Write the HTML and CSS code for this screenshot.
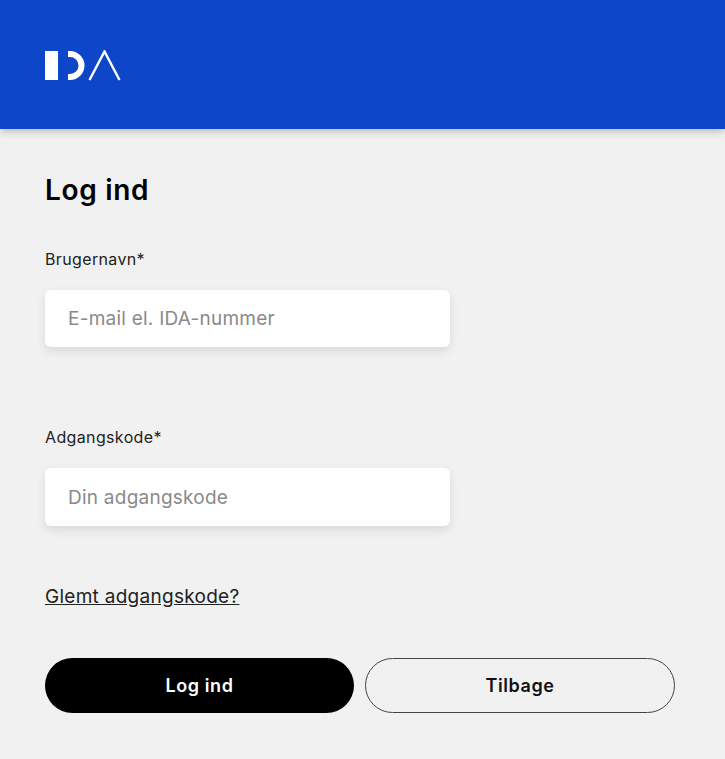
FILE: index.html
```html
<!DOCTYPE html>
<html lang="da">
  <head>
    <meta name="viewport" content="width=device-width, initial-scale=1.0" />
    <title>Log ind</title>
    <link rel="stylesheet" href="styles.css">
  </head>
  <body>
    <header class="topbar">
      <svg class="logo" width="76" height="31" viewBox="0 0 76 31" aria-label="IDA">
        <rect x="0" y="1" width="13" height="29" fill="#fff" />
        <path d="M23 1 H25 A14.5 14.5 0 0 1 25 30 H23 V24 H25 A8.5 8.5 0 0 0 25 7 H23 Z" fill="#fff" />
        <path d="M44.500 30 L59.500 1.500 L74.500 30" fill="none" stroke="#fff" stroke-width="2.400" />
      </svg>
    </header>
    <main class="content">
      <h1>Log ind</h1>
      <form class="login-form">
        <div class="field">
          <label for="username">Brugernavn*</label>
          <input type="text" id="username" placeholder="E-mail el. IDA-nummer" />
        </div>
        <div class="field">
          <label for="password">Adgangskode*</label>
          <input type="password" id="password" placeholder="Din adgangskode" />
        </div>
        <a href="#" class="forgot">Glemt adgangskode?</a>
        <div class="buttons">
          <button type="submit" class="btn btn-primary">Log ind</button>
          <button type="button" class="btn btn-outline">Tilbage</button>
        </div>
      </form>
    </main>
  </body>
</html>
```
FILE: styles.css
```css
* {
  padding: 0;
  margin: 0;
  box-sizing: border-box;
  font-family: "Inter", "Liberation Sans", sans-serif;
}
html,
body {
  height: 100%;
}
body {
  background-color: #f1f1f1;
  overflow: hidden;
}
.topbar {
  height: 129px;
  background-color: #0d46c9;
  box-shadow: 0 2px 8px rgba(0, 0, 0, 0.25);
  padding: 50px 0 0 45px;
}
.logo {
  display: block;
}
.content {
  padding: 45px 50px 0 45px;
}
h1 {
  font-size: 28px;
  line-height: 32px;
  font-weight: 600;
  letter-spacing: 0.7px;
  color: #000000;
}
.field {
  width: 405px;
  margin-top: 43px;
}
.field + .field {
  margin-top: 80px;
}
.field + .field input {
  height: 58px;
}
label {
  display: block;
  font-size: 16px;
  line-height: 20px;
  letter-spacing: 0.36px;
  font-weight: 400;
  color: #222222;
  margin-bottom: 21px;
}
input {
  display: block;
  width: 100%;
  height: 57px;
  padding: 0 23px;
  font-size: 19px;
  letter-spacing: 0.24px;
  color: #222222;
  background-color: #ffffff;
  border: none;
  border-radius: 6px;
  outline: none;
  box-shadow: 0 4px 10px rgba(0, 0, 0, 0.1);
}
input::placeholder {
  color: #8a8a8a;
  opacity: 1;
}
.forgot {
  display: block;
  width: fit-content;
  margin-top: 59px;
  font-size: 19px;
  line-height: 24px;
  letter-spacing: 0.28px;
  color: #222222;
}
.buttons {
  display: grid;
  grid-template-columns: 309px 310px;
  gap: 11px;
  margin-top: 49px;
}
.btn {
  height: 55px;
  font-size: 18px;
  font-weight: 600;
  letter-spacing: 0.6px;
  border-radius: 28px;
  cursor: pointer;
}
.btn-primary {
  background-color: #000000;
  color: #ffffff;
  border: none;
}
.btn-outline {
  background-color: transparent;
  color: #111111;
  border: 1px solid #444444;
}
```
